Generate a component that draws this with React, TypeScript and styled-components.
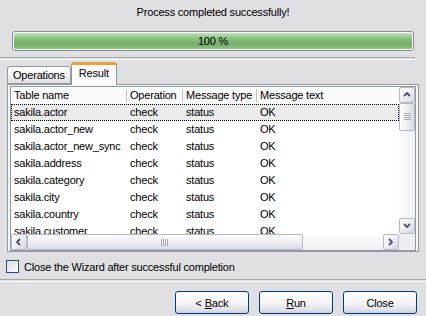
import React from "react";
import styled, { createGlobalStyle } from "styled-components";

const GlobalStyle = createGlobalStyle`
  html, body {
    margin: 0;
    padding: 0;
    background: #e0dfe3;
  }
  body {
    font-family: "Liberation Sans", Arial, sans-serif;
    font-size: 11px;
    letter-spacing: -0.2px;
    color: #000;
  }
`;

const ROWS = [
  "sakila.actor",
  "sakila.actor_new",
  "sakila.actor_new_sync",
  "sakila.address",
  "sakila.category",
  "sakila.city",
  "sakila.country",
  "sakila.customer",
];

const COLS = [114, 56, 74, 145];

const Wizard = styled.div`
  width: 426px;
  height: 316px;
  display: flex;
  flex-direction: column;
  background: #e0dfe3;
  overflow: hidden;
`;

const Title = styled.div`
  height: 24px;
  line-height: 24px;
  text-align: center;
`;

const Progress = styled.div`
  margin: 7px 12px 0 12px;
  height: 20px;
  box-sizing: border-box;
  border: 1px solid #8c8c8c;
  border-radius: 3px;
  background: #fff;
  padding: 1px;
  display: flex;
`;

const ProgressFill = styled.div`
  flex: 1;
  border-radius: 2px;
  background: linear-gradient(
    180deg,
    #c4e4bd 0%,
    #9ed294 18%,
    #84bf79 40%,
    #76b06b 65%,
    #7db673 85%,
    #92c788 100%
  );
  display: flex;
  align-items: center;
  justify-content: center;
`;

const Separator = styled.div<{ $right?: number; $top: number }>`
  margin-top: ${(p) => p.$top}px;
  margin-right: ${(p) => p.$right ?? 0}px;
  height: 1px;
  border-top: 1px solid #a7a6aa;
  border-bottom: 1px solid #ffffff;
`;

const TabArea = styled.div`
  margin: 2px 0 0 7px;
  width: 412px;
  display: flex;
  flex-direction: column;
`;

const TabStrip = styled.div`
  height: 22px;
  display: flex;
  align-items: flex-end;
  position: relative;
  z-index: 1;
`;

const Tab = styled.div<{ $active?: boolean }>`
  box-sizing: border-box;
  height: ${(p) => (p.$active ? 23 : 18)}px;
  margin-bottom: ${(p) => (p.$active ? -1 : 0)}px;
  padding: 0 ${(p) => (p.$active ? 7 : 5)}px;
  border: 1px solid #919b9c;
  border-bottom: ${(p) => (p.$active ? "none" : "1px solid #919b9c")};
  border-top: ${(p) => (p.$active ? "3px solid #f0a030" : "1px solid #919b9c")};
  border-radius: 3px 3px 0 0;
  background: ${(p) =>
    p.$active ? "#fcfcfe" : "linear-gradient(180deg, #ffffff 0%, #f1f1f4 60%, #dcdce4 100%)"};
  display: flex;
  align-items: center;
  line-height: 14px;
  padding-bottom: ${(p) => (p.$active ? 5 : 0)}px;
`;

const Panel = styled.div`
  box-sizing: border-box;
  height: 168px;
  border: 1px solid #919b9c;
  background: #f7f7f9;
  padding: 1px 2px 0 2px;
`;

const ListBox = styled.div`
  box-sizing: border-box;
  height: 165px;
  border: 1px solid #8f9aa8;
  background: #fff;
  display: grid;
  grid-template-columns: 1fr 16px;
  grid-template-rows: 1fr 16px;
`;

const Viewport = styled.div`
  overflow: hidden;
`;

const Row = styled.div<{ $header?: boolean; $selected?: boolean }>`
  box-sizing: border-box;
  height: 17px;
  display: flex;
  align-items: center;
  white-space: nowrap;
  background: ${(p) => (p.$selected ? "#ebebeb" : p.$header ? "#fbfbfb" : "#fff")};
  border: 1px dotted ${(p) => (p.$selected ? "#000" : "transparent")};
`;

const Cell = styled.div<{ $w: number; $header?: boolean; $first?: boolean }>`
  width: ${(p) => p.$w}px;
  flex: none;
  box-sizing: border-box;
  padding-left: ${(p) => (p.$first ? 1 : 3)}px;
  height: 13px;
  line-height: 13px;
  border-left: ${(p) => (p.$header && !p.$first ? "1px solid #c4c3bd" : "1px solid transparent")};
  overflow: hidden;
`;

const ScrollV = styled.div`
  display: flex;
  flex-direction: column;
  background: linear-gradient(90deg, #fdfdfe 0%, #f0f0f4 100%);
`;

const ScrollH = styled.div`
  display: flex;
  background: linear-gradient(180deg, #fdfdfe 0%, #f0f0f4 100%);
`;

const Corner = styled.div`
  background: #f0f0f4;
`;

const ScrollButton = styled.div`
  box-sizing: border-box;
  width: 16px;
  height: 16px;
  flex: none;
  border: 1px solid #b7b7c6;
  border-radius: 2px;
  background: linear-gradient(135deg, #ffffff 0%, #ececf2 55%, #d4d4de 100%);
  display: flex;
  align-items: center;
  justify-content: center;
`;

const Thumb = styled.div<{ $vertical?: boolean; $size: number }>`
  box-sizing: border-box;
  flex: none;
  width: ${(p) => (p.$vertical ? "16px" : `${p.$size}px`)};
  height: ${(p) => (p.$vertical ? `${p.$size}px` : "16px")};
  border: 1px solid #b7b7c6;
  border-radius: 2px;
  background: ${(p) =>
    p.$vertical
      ? "linear-gradient(90deg, #ffffff 0%, #eeeef3 50%, #d9d9e3 100%)"
      : "linear-gradient(180deg, #ffffff 0%, #eeeef3 50%, #d9d9e3 100%)"};
  display: flex;
  align-items: center;
  justify-content: center;
`;

const Track = styled.div`
  flex: 1;
`;

const CheckRow = styled.label`
  margin: 8px 0 0 6px;
  height: 13px;
  display: flex;
  align-items: center;
  gap: 5px;
`;

const CheckBox = styled.span`
  box-sizing: border-box;
  width: 13px;
  height: 13px;
  border: 1px solid #1c5180;
  background: linear-gradient(135deg, #dcdcd7 0%, #fdfdfd 100%);
`;

const ButtonRow = styled.div`
  margin: 9px 9px 0 0;
  display: flex;
  justify-content: flex-end;
  gap: 10px;
`;

const Button = styled.button`
  box-sizing: border-box;
  width: 74px;
  height: 23px;
  border: 1px solid #003c74;
  border-radius: 3px;
  background: linear-gradient(180deg, #ffffff 0%, #f5f5f8 50%, #e2e2ea 85%, #cfcfdc 100%);
  font-family: "Liberation Sans", Arial, sans-serif;
  font-size: 11px;
  letter-spacing: -0.2px;
  color: #000;
  padding: 0;
`;

const Chevron = ({ dir }: { dir: "up" | "down" | "left" | "right" }) => {
  const pts = {
    up: "1,5 4,2 7,5",
    down: "1,2 4,5 7,2",
    left: "5,1 2,4 5,7",
    right: "2,1 5,4 2,7",
  }[dir];
  return (
    <svg width="8" height="8" viewBox="0 0 8 8">
      <polyline points={pts} fill="none" stroke="#4d4d6d" strokeWidth="1.8" />
    </svg>
  );
};

const Grip = ({ vertical }: { vertical?: boolean }) => (
  <svg width={vertical ? 7 : 8} height={vertical ? 8 : 7} viewBox={vertical ? "0 0 7 8" : "0 0 8 7"}>
    {[0, 2, 4, 6].map((o) =>
      vertical ? (
        <line key={o} x1="0" y1={o + 0.5} x2="7" y2={o + 0.5} stroke="#a9a9b8" strokeWidth="1" />
      ) : (
        <line key={o} x1={o + 0.5} y1="0" x2={o + 0.5} y2="7" stroke="#a9a9b8" strokeWidth="1" />
      )
    )}
  </svg>
);

const App: React.FC = () => {
  return (
    <Wizard>
      <GlobalStyle />
      <Title>Process completed successfully!</Title>
      <Progress>
        <ProgressFill>100 %</ProgressFill>
      </Progress>
      <Separator $top={6} $right={11} />

      <TabArea>
        <TabStrip>
          <Tab>Operations</Tab>
          <Tab $active>Result</Tab>
        </TabStrip>
        <Panel>
          <ListBox>
            <Viewport>
              <Row $header>
                <Cell $w={COLS[0]} $header $first>Table name</Cell>
                <Cell $w={COLS[1]} $header>Operation</Cell>
                <Cell $w={COLS[2]} $header>Message type</Cell>
                <Cell $w={COLS[3]} $header>Message text</Cell>
              </Row>
              {ROWS.map((name, i) => (
                <Row key={name} $selected={i === 0}>
                  <Cell $w={COLS[0]} $first>{name}</Cell>
                  <Cell $w={COLS[1]}>check</Cell>
                  <Cell $w={COLS[2]}>status</Cell>
                  <Cell $w={COLS[3]}>OK</Cell>
                </Row>
              ))}
            </Viewport>
            <ScrollV>
              <ScrollButton><Chevron dir="up" /></ScrollButton>
              <Thumb $vertical $size={28}><Grip vertical /></Thumb>
              <Track />
              <ScrollButton><Chevron dir="down" /></ScrollButton>
            </ScrollV>
            <ScrollH>
              <ScrollButton><Chevron dir="left" /></ScrollButton>
              <Thumb $size={276}><Grip /></Thumb>
              <Track />
              <ScrollButton><Chevron dir="right" /></ScrollButton>
            </ScrollH>
            <Corner />
          </ListBox>
        </Panel>
      </TabArea>

      <CheckRow>
        <CheckBox />
        Close the Wizard after successful completion
      </CheckRow>
      <Separator $top={6} />

      <ButtonRow>
        <Button>&lt; <u>B</u>ack</Button>
        <Button><u>R</u>un</Button>
        <Button>Close</Button>
      </ButtonRow>
    </Wizard>
  );
};

export default App;
